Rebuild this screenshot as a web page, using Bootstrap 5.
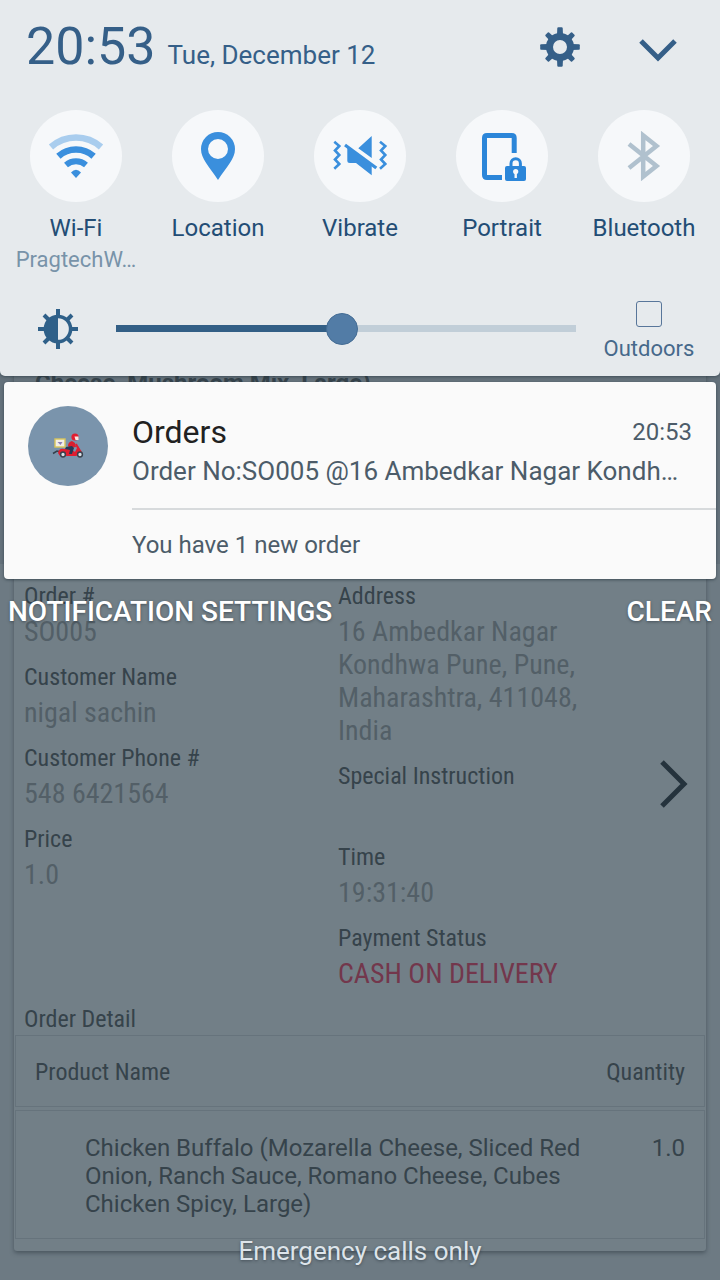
<!DOCTYPE html>
<html lang="en">
<head>
<meta charset="utf-8">
<meta name="viewport" content="width=device-width, initial-scale=1">
<title>Notifications</title>
<link href="https://cdn.jsdelivr.net/npm/bootstrap@5.3.0/dist/css/bootstrap.min.css" rel="stylesheet">
<style>
  :root { --navy: #355f88; --deep: #234d75; --blue: #3a8fdd; --ink: #36434b; --dim: #535f67; --rule: #66737c; }
  body { font-family: Roboto, "Liberation Sans", sans-serif; font-size: 24px; line-height: 28px; background: #6d7a83; color: var(--ink); }
  button { background: none; border: 0; padding: 0; color: inherit; }

  /* The shade and the app share one grid cell, so the shade lies over the app. */
  .stage { display: grid; grid-template-columns: minmax(0, 1fr); }
  .stage > * { grid-area: 1 / 1; }

  /* App behind the shade */
  .earlier { background: #64717b; padding: 0 14px 12px; height: 564px; }
  .sheet { background: #727f87; box-shadow: 0 2px 4px rgba(50, 62, 70, .6); border-radius: 3px; }
  .earlier .sheet { height: 100%; padding: 369px 21px 0; background: #66737c; }
  .order { margin: 4px 14px 30px; }
  .fields { padding: 14px 18px 0 10px; }
  .condensed { font-family: "Roboto Condensed", "Liberation Sans Narrow", Roboto, sans-serif; }
  .fields dt { font-weight: 400; line-height: 29px; margin-bottom: 4px; }
  .fields dd { font-size: 28px; line-height: 33px; min-height: 33px; margin-bottom: 15px; color: var(--dim); }
  .fields dd.due { color: #73374c; }
  .side-a { flex: 0 0 314px; }
  .side-b { flex: 0 1 256px; }
  .open-order { padding-bottom: 20px; }
  .detail-title { font-size: 24px; line-height: 29px; padding: 0 10px 1px; }
  .items { border-collapse: separate; border-spacing: 0 3px; margin: -3px 0 0; }
  .items th, .items td { border: 1px solid var(--rule); font-weight: 400; vertical-align: top; }
  .items th { padding: 22px 19px 20px; }
  .items td { padding: 23px 19px 20px; }
  .items tr > :first-child { border-right: 0; padding-right: 0; }
  .items tr > :last-child { border-left: 0; text-align: right; width: 120px; }
  .items td:first-child { padding-left: 69px; }
  .items-wrap { padding: 0 1px 9px; }

  /* Quick settings */
  .shade { min-height: 100vh; }
  .quick { background: #e6eaed; color: var(--navy); border-radius: 0 0 5px 5px; box-shadow: 0 1px 3px rgba(30, 45, 55, .5); padding-bottom: 13px; }
  .quick-head { padding: 17px 42px 33px 26px; }
  .clock { font-size: 52px; line-height: 60px; }
  .date { font-size: 26px; margin-left: 12px; }
  .head-actions { gap: 58px; }
  .tiles { padding: 0 5px; }
  .tile { flex: 1 1 0; min-width: 0; color: var(--deep); line-height: 32px; }
  .disc { width: 92px; height: 92px; border-radius: 50%; background: #f6f8fa; color: var(--blue); margin-bottom: 10px; }
  .sub-label { font-size: 22px; color: #7893a9; }
  .dim-row { padding: 25px 0 0 38px; }
  .slider { -webkit-appearance: none; appearance: none; background: transparent; min-width: 0; height: 40px; margin-top: 7px; }
  .light { margin: 8px 38px 0 0; }
  .slider::-webkit-slider-runnable-track { height: 7px; background: linear-gradient(to right, #335f86 49%, #c1ced8 49%); }
  .slider::-webkit-slider-thumb { -webkit-appearance: none; width: 32px; height: 32px; margin-top: -12px; border-radius: 50%; background: #527ca6; border: 1px solid #446c94; }
  .outdoors { width: 142px; margin-left: 2px; font-size: 22px; color: #46698b; }
  .outdoors input { -webkit-appearance: none; appearance: none; width: 26px; height: 26px; margin: 0 0 8px; border: 1px solid #58769a; border-radius: 3px; }

  /* Notification */
  .notice { background: #fafafa; color: #4c5c69; margin: 6px 4px 0; border-radius: 4px; padding: 24px 0 20px 24px; box-shadow: 0 1px 3px rgba(30, 45, 55, .6); }
  .avatar { width: 80px; height: 80px; background: #7a94ac; margin-right: 24px; }
  .notice-top { padding: 7px 24px 21px 0; border-bottom: 2px solid #d7dadc; }
  .notice h1 { font-size: 32px; line-height: 38px; font-weight: 400; color: #212121; }
  .notice-text { font-size: 26px; line-height: 32px; margin-top: 4px; }
  .more { padding-top: 21px; }
  .shade-actions { padding: 17px 8px; font-size: 28px; line-height: 32px; color: #fff; text-shadow: 0 1px 3px rgba(40, 50, 58, .6); }
  .shade-actions button { font-weight: 500; text-shadow: inherit; }
  .carrier { font-size: 26px; line-height: 32px; padding-bottom: 14px; color: #dde4ea; text-shadow: 0 1px 3px rgba(40, 50, 58, .6); }
</style>
</head>
<body>
<div class="stage">

  <main>
    <section class="earlier">
      <div class="sheet fw-bold">Cheese, Mushroom Mix, Large)</div>
    </section>
    <article class="sheet order">
      <div class="fields condensed d-flex">
        <dl class="side-a mb-0">
          <dt>Order #</dt><dd>SO005</dd>
          <dt>Customer Name</dt><dd>nigal sachin</dd>
          <dt>Customer Phone #</dt><dd>548 6421564</dd>
          <dt>Price</dt><dd>1.0</dd>
        </dl>
        <dl class="side-b mb-0">
          <dt>Address</dt><dd>16 Ambedkar Nagar Kondhwa Pune, Pune, Maharashtra, 411048, India</dd>
          <dt>Special Instruction</dt><dd></dd>
          <dt>Time</dt><dd>19:31:40</dd>
          <dt>Payment Status</dt><dd class="due text-nowrap">CASH ON DELIVERY</dd>
        </dl>
        <button type="button" class="open-order ms-auto align-self-center" aria-label="Open order">
          <svg class="d-block" width="29" height="48" viewBox="0 0 29 48" fill="none" stroke="#25333d" stroke-width="5"><path d="M3 2 25 24 3 46"/></svg>
        </button>
      </div>
      <h2 class="condensed detail-title mb-0 fw-normal">Order Detail</h2>
      <div class="items-wrap">
        <table class="items w-100">
          <thead class="condensed"><tr><th scope="col">Product Name</th><th scope="col">Quantity</th></tr></thead>
          <tbody><tr><td>Chicken Buffalo (Mozarella Cheese, Sliced Red Onion, Ranch Sauce, Romano Cheese, Cubes Chicken Spicy, Large)</td><td>1.0</td></tr></tbody>
        </table>
      </div>
    </article>
  </main>

  <div class="shade d-flex flex-column">
    <section class="quick">
      <div class="quick-head d-flex align-items-center justify-content-between">
        <div class="d-flex align-items-baseline"><time class="clock">20:53</time><span class="date">Tue, December 12</span></div>
        <div class="head-actions d-flex">
          <button type="button" aria-label="Settings">
            <svg class="d-block" width="40" height="40" viewBox="0 0 40 40" fill="currentColor">
              <circle cx="20" cy="20" r="10.5" fill="none" stroke="currentColor" stroke-width="7"/>
              <g id="teeth"><path d="M17 8 17.3 1q.2-.8 1-.8h3.4q.8 0 1 .8L23 8z"/><path d="M17 32l.3 7q.2.8 1 .8h3.4q.8 0 1-.8L23 32z"/><path d="M8 17l-7 .3q-.8.2-.8 1v3.4q0 .8.8 1L8 23z"/><path d="M32 17l7 .3q.8.2.8 1v3.4q0 .8-.8 1L32 23z"/></g>
              <use href="#teeth" transform="rotate(45 20 20) translate(1 1) scale(.95)"/>
            </svg>
          </button>
          <button type="button" aria-label="Collapse">
            <svg class="d-block" width="40" height="40" viewBox="0 0 40 40" fill="none" stroke="currentColor" stroke-width="5"><path d="M3 14 20 31 37 14"/></svg>
          </button>
        </div>
      </div>

      <div class="tiles d-flex">
        <button type="button" class="tile d-flex flex-column align-items-center">
          <span class="disc"><svg class="d-block" viewBox="0 0 92 92" fill="none" stroke="currentColor" stroke-width="6.5">
            <path d="M21 37A37.6 37.6 0 0 1 71 37" stroke="#a9cdee"/><path d="M28.4 46.2A26.5 26.5 0 0 1 63.6 46.2"/><path d="M36 55A15.5 15.5 0 0 1 56 55" stroke-width="6"/><path d="M41 62.5q5-5.5 10 0L46 68z" fill="currentColor" stroke="none"/></svg></span>
          <span>Wi-Fi</span><span class="sub-label">PragtechW…</span>
        </button>
        <button type="button" class="tile d-flex flex-column align-items-center">
          <span class="disc"><svg class="d-block" viewBox="0 0 92 92" fill="currentColor" fill-rule="evenodd"><path d="M46 22a17 17 0 0 1 17 17c0 10-8 17-17 31-9-14-17-21-17-31a17 17 0 0 1 17-17zm0 7a10 10 0 1 0 0 20 10 10 0 0 0 0-20z"/></svg></span>
          <span>Location</span>
        </button>
        <button type="button" class="tile d-flex flex-column align-items-center">
          <span class="disc"><svg class="d-block" viewBox="0 0 92 92" fill="currentColor">
            <path d="M20.3 31.7 25.3 36 21 40.5 25.3 45 21 49.5 25.3 54 20.3 58.7M66 31.7 71.3 36 67 40.5 71.3 45 67 49.5 71.3 54 66 58.7" fill="none" stroke="currentColor" stroke-width="2.6"/>
            <path d="M44.3 38.3 57.7 26V48zM33.3 37V50.5q0 2.5 2.5 2.5H42L57.7 65.3V55z"/><path d="M31 35 62.3 58" stroke="currentColor" stroke-width="3.2"/></svg></span>
          <span>Vibrate</span>
        </button>
        <button type="button" class="tile d-flex flex-column align-items-center">
          <span class="disc"><svg class="d-block" viewBox="0 0 92 92" fill="none" stroke="#2b86d9" stroke-width="5">
            <path d="M58.2 43V28q0-2.5-2.5-2.5H31q-2.5 0-2.5 2.5v37q0 2.5 2.5 2.5h15"/>
            <path d="M55 57v-3.5a4.7 4.7 0 0 1 9.4 0V57" stroke-width="3"/><rect x="49" y="56" width="21" height="15" rx="2" fill="#2b86d9" stroke="none"/><circle cx="59.7" cy="61.5" r="2.6" fill="#f6f8fa" stroke="none"/><path d="M59.7 62v6" stroke="#f6f8fa" stroke-width="2.4"/></svg></span>
          <span>Portrait</span>
        </button>
        <button type="button" class="tile d-flex flex-column align-items-center">
          <span class="disc"><svg class="d-block" viewBox="0 0 92 92" fill="none" stroke="#b0c1ce" stroke-width="4.5"><path d="M31 34 58.5 56 45.2 66.500V25.500L58.5 36 31 58"/></svg></span>
          <span>Bluetooth</span>
        </button>
      </div>

      <div class="dim-row d-flex align-items-start">
        <svg class="light flex-shrink-0" width="40" height="40" viewBox="0 0 40 40" fill="none" stroke="#2f6089" stroke-width="4" aria-hidden="true">
          <circle cx="20" cy="20" r="12.6" stroke-width="3.5"/><path d="M20 8a12 12 0 0 0 0 24z" fill="#2f6089" stroke="none"/>
          <path d="M20 0v7M20 33v7M0 20h7M33 20h7M6 6l5 5M29 29l5 5M34 6l-5 5M11 29l-5 5"/></svg>
        <input type="range" class="slider flex-grow-1" min="0" max="100" value="49" aria-label="Brightness">
        <label class="outdoors d-flex flex-column align-items-center flex-shrink-0"><input type="checkbox">Outdoors</label>
      </div>
    </section>

    <section class="notice d-flex align-items-start">
      <div class="avatar rounded-circle d-flex align-items-center justify-content-center flex-shrink-0">
        <svg width="34" height="26" viewBox="0 0 34 26" aria-hidden="true">
          <path d="M2 20.5 6 18l4 1" stroke="#35404c" stroke-width="1.5" fill="none"/>
          <rect x="4" y="6" width="10" height="8" fill="#f2efe6" stroke="#d9c65a" stroke-width="1.4"/><path d="M6.500 9h5l-2 3z" fill="#8b7fb8"/>
          <path d="M7 20q1-5 6-4h7l4 3 3-6 4 6-1 2-5 2H9z" fill="#e01e31"/>
          <path d="M25 11l4 8" stroke="#e01e31" stroke-width="2"/>
          <path d="M17 13q0-4 4-5l3 2 1 4-6 1z" fill="#d9202f"/><path d="M15 14l6-1 2 2-2 6h-3l1-4-5-1z" fill="#263a55"/>
          <circle cx="24" cy="4" r="3.6" fill="#e01e31"/><path d="M23.5 3.500h4v3.500h-3z" fill="#fbe6e0"/>
          <g fill="#d9e0e6" stroke="#39424d" stroke-width="1.5"><circle cx="12" cy="21.5" r="2.4"/><circle cx="29" cy="21.5" r="2.4"/></g>
        </svg>
      </div>
      <div class="flex-grow-1 overflow-hidden">
        <div class="notice-top">
          <div class="d-flex align-items-center justify-content-between"><h1 class="mb-0">Orders</h1><time>20:53</time></div>
          <div class="notice-text text-nowrap">Order No:SO005 @16 Ambedkar Nagar Kondh…</div>
        </div>
        <div class="more">You have 1 new order</div>
      </div>
    </section>

    <div class="shade-actions d-flex justify-content-between">
      <button type="button">NOTIFICATION SETTINGS</button>
      <button type="button">CLEAR</button>
    </div>
    <div class="carrier mt-auto text-center">Emergency calls only</div>
  </div>
</div>
<script src="https://cdn.jsdelivr.net/npm/bootstrap@5.3.0/dist/js/bootstrap.bundle.min.js"></script>
</body>
</html>
